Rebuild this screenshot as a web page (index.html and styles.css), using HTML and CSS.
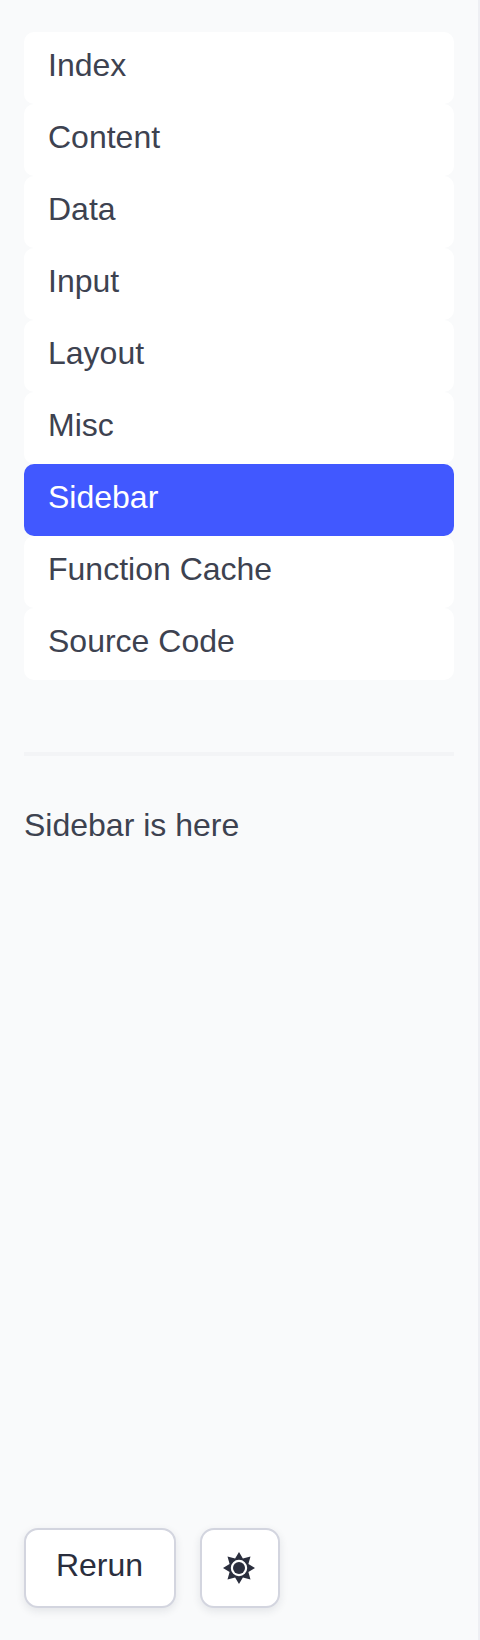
FILE: index.html
```html
<!DOCTYPE html>
<html lang="en">
<head>
<meta charset="utf-8">
<title>Sidebar</title>
<link rel="stylesheet" href="styles.css">
</head>
<body>
<aside class="sidebar">
  <nav class="menu">
    <a class="item">Index</a>
    <a class="item">Content</a>
    <a class="item">Data</a>
    <a class="item">Input</a>
    <a class="item">Layout</a>
    <a class="item">Misc</a>
    <a class="item active">Sidebar</a>
    <a class="item">Function Cache</a>
    <a class="item">Source Code</a>
  </nav>
  <hr class="divider">
  <p class="note">Sidebar is here</p>
  <div class="actions">
    <button class="btn rerun">Rerun</button>
    <button class="btn theme" aria-label="Toggle theme">
      <svg class="sun" viewBox="0 0 32 32" width="32" height="32">
        <path fill-rule="evenodd" d="M16 0L19.9 6.6L27.5 4.5L25.4 12.1L32 16L25.4 19.9L27.5 27.5L19.9 25.4L16 32L12.1 25.4L4.5 27.5L6.6 19.9L0 16L6.6 12.1L4.5 4.5L12.1 6.6ZM16 7.8a8.2 8.2 0 1 0 0 16.4a8.2 8.2 0 0 0 0-16.4Z"/>
        <circle cx="16" cy="16" r="6"/>
      </svg>
    </button>
  </div>
</aside>
</body>
</html>
```

FILE: styles.css
```css
* { box-sizing: border-box; }
html, body { margin: 0; height: 100%; background: #fff; }
body { font-family: "Liberation Sans", Arial, sans-serif; color: #3d4250; }
.sidebar {
  width: 480px;
  height: 1640px;
  background: #f9fafb;
  border-right: 2px solid #eeeff3;
  padding: 32px 24px;
  display: flex;
  flex-direction: column;
}
.menu { display: flex; flex-direction: column; width: 430px; }
.item {
  display: block;
  height: 72px;
  padding: 9px 24px 15px;
  font-size: 32px;
  line-height: 48px;
  background: #fff;
  border-radius: 10px;
  color: #3d4250;
}
.item.active { background: #4158ff; color: #fff; }
.divider {
  width: 430px;
  height: 4px;
  margin: 72px 0 0;
  border: 0;
  background: #f3f4f6;
}
.note { margin: 45px 0 0; font-size: 32px; line-height: 48px; }
.actions { margin-top: auto; display: flex; gap: 24px; }
.btn {
  height: 80px;
  background: #fff;
  border: 2px solid #d3d5df;
  border-radius: 14px;
  box-shadow: 0 3px 8px rgba(31, 41, 55, .1);
  font-family: inherit;
  font-size: 32px;
  color: #2a2e3d;
  display: flex;
  align-items: center;
  justify-content: center;
}
.rerun { width: 152px; padding: 0 1px 6px 0; }
.theme { width: 80px; padding: 0 2px 0 0; }
.sun { fill: #2a2e3d; display: block; }
```
